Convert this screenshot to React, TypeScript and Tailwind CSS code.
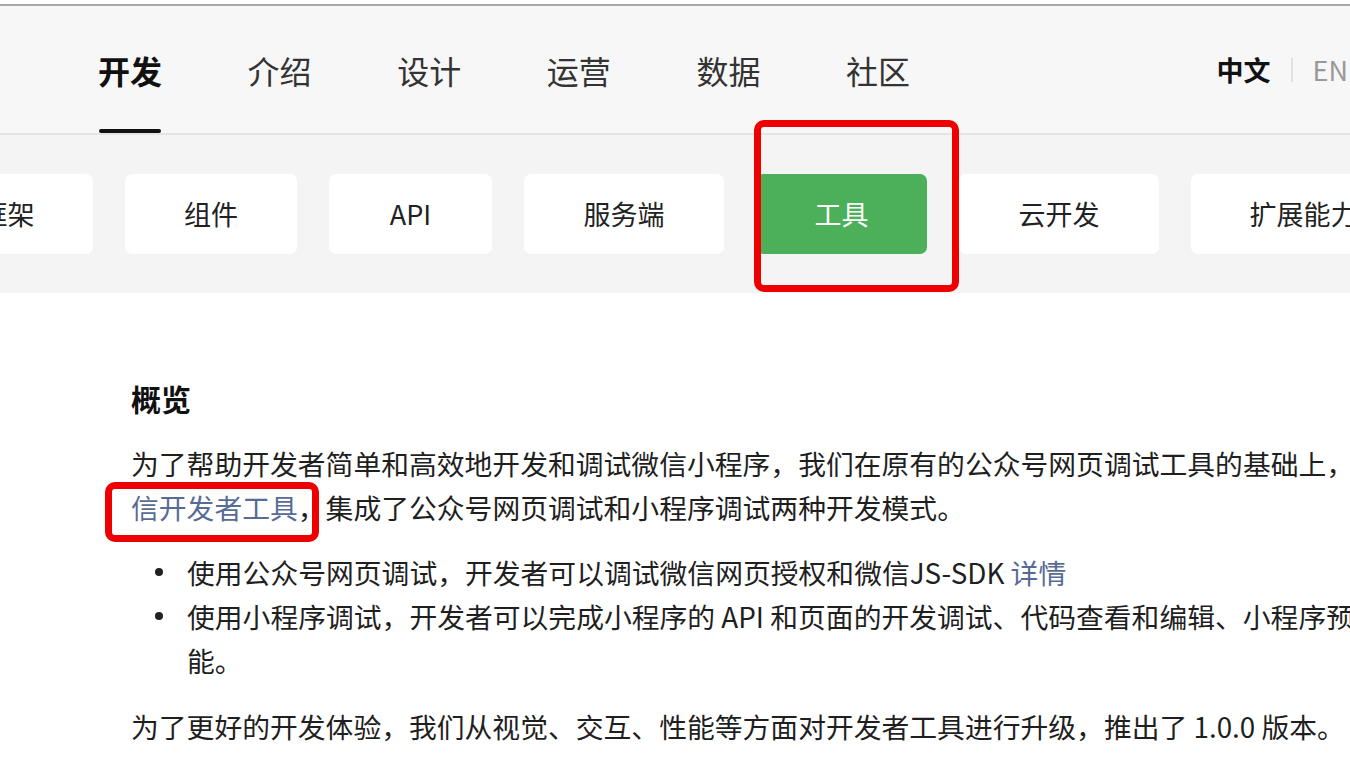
import React from "react";

const font = { fontFamily: '"Noto Sans CJK SC", "Noto Sans", sans-serif' };

const navItems = ["开发", "介绍", "设计", "运营", "数据", "社区"];
const subItems: { label: string; w: string; active?: boolean }[] = [
  { label: "框架", w: "w-[171px]" },
  { label: "组件", w: "w-[172px]" },
  { label: "API", w: "w-[163px]" },
  { label: "服务端", w: "w-[200px]" },
  { label: "工具", w: "w-[171px]", active: true },
  { label: "云开发", w: "w-[200px]" },
  { label: "扩展能力", w: "w-[225px]" },
];

export default function App() {
  return (
    <div
      className="relative w-[1350px] h-[764px] overflow-hidden bg-white text-[#1f1f1f]"
      style={font}
    >
      {/* top strip */}
      <div className="h-[4px] bg-white" />
      <div className="h-[2px] bg-[#a9a9a9]" />

      {/* main nav */}
      <div className="h-[129px] bg-[#f7f7f7] border-b-2 border-[#e4e4e4] flex items-stretch justify-between">
        <div className="flex items-stretch pl-[98px] gap-[85.6px]">
          {navItems.map((n, i) => (
            <div key={n} className="relative flex items-center">
              <span
                className={
                  i === 0
                    ? "text-[32px] leading-none font-bold text-[#111] whitespace-nowrap"
                    : "text-[32px] leading-none text-[#333] whitespace-nowrap"
                }
              >
                {n}
              </span>
              {i === 0 && (
                <div className="absolute left-[1px] right-[1px] bottom-0 h-[4px] rounded-full bg-[#111]" />
              )}
            </div>
          ))}
        </div>
        <div className="flex items-center gap-[20px] mr-[2px] whitespace-nowrap">
          <span className="text-[27px] leading-none font-bold text-[#111]">中文</span>
          <span className="w-[2px] h-[24px] bg-[#e2e2e2]" />
          <span className="text-[27px] leading-none text-[#999]">EN</span>
        </div>
      </div>

      {/* sub nav */}
      <div className="h-[158px] bg-[#f4f4f5] flex items-center">
        <div className="flex gap-[32px] ml-[-78px]">
          {subItems.map((s) => (
            <div
              key={s.label}
              className={
                s.active
                  ? `${s.w} shrink-0 h-[80px] rounded-[7px] bg-[#4caf5a] text-white flex items-center justify-center text-[27px] whitespace-nowrap`
                  : `${s.w} shrink-0 h-[80px] rounded-[7px] bg-white text-[#222] flex items-center justify-center text-[27px] whitespace-nowrap`
              }
            >
              {s.label}
            </div>
          ))}
        </div>
      </div>

      {/* content */}
      <div className="pl-[131px] pt-[83px] text-[27.8px] leading-[44px] whitespace-nowrap">
        <h2 className="text-[30px] leading-[44px] font-bold text-[#111] mb-[21px]">概览</h2>
        <div className="mb-[21px]">
          <div>为了帮助开发者简单和高效地开发和调试微信小程序，我们在原有的公众号网页调试工具的基础上，</div>
          <div>
            <span className="text-[#576b95]">信开发者工具</span>，集成了公众号网页调试和小程序调试两种开发模式。
          </div>
        </div>
        <div className="mb-[22px]">
          <div className="flex">
            <div className="w-[56px] shrink-0 flex items-center">
              <span className="ml-[24px] w-[8px] h-[8px] rounded-full bg-[#222]" />
            </div>
            <div>
              使用公众号网页调试，开发者可以调试微信网页授权和微信JS-SDK{" "}
              <span className="text-[#576b95]">详情</span>
            </div>
          </div>
          <div className="flex">
            <div className="w-[56px] shrink-0 flex items-start h-[44px]">
              <span className="ml-[24px] mt-[18px] w-[8px] h-[8px] rounded-full bg-[#222]" />
            </div>
            <div>
              <div>使用小程序调试，开发者可以完成小程序的 API 和页面的开发调试、代码查看和编辑、小程序预览</div>
              <div>能。</div>
            </div>
          </div>
        </div>
        <div>为了更好的开发体验，我们从视觉、交互、性能等方面对开发者工具进行升级，推出了 1.0.0 版本。</div>
      </div>

      {/* red annotation boxes */}
      <div className="absolute left-[754px] top-[120px] w-[205px] h-[172px] border-[7px] border-[#ee0000] rounded-[10px]" />
      <div className="absolute left-[105px] top-[482px] w-[214px] h-[60px] border-[7px] border-[#ee0000] rounded-[10px]" />
    </div>
  );
}
